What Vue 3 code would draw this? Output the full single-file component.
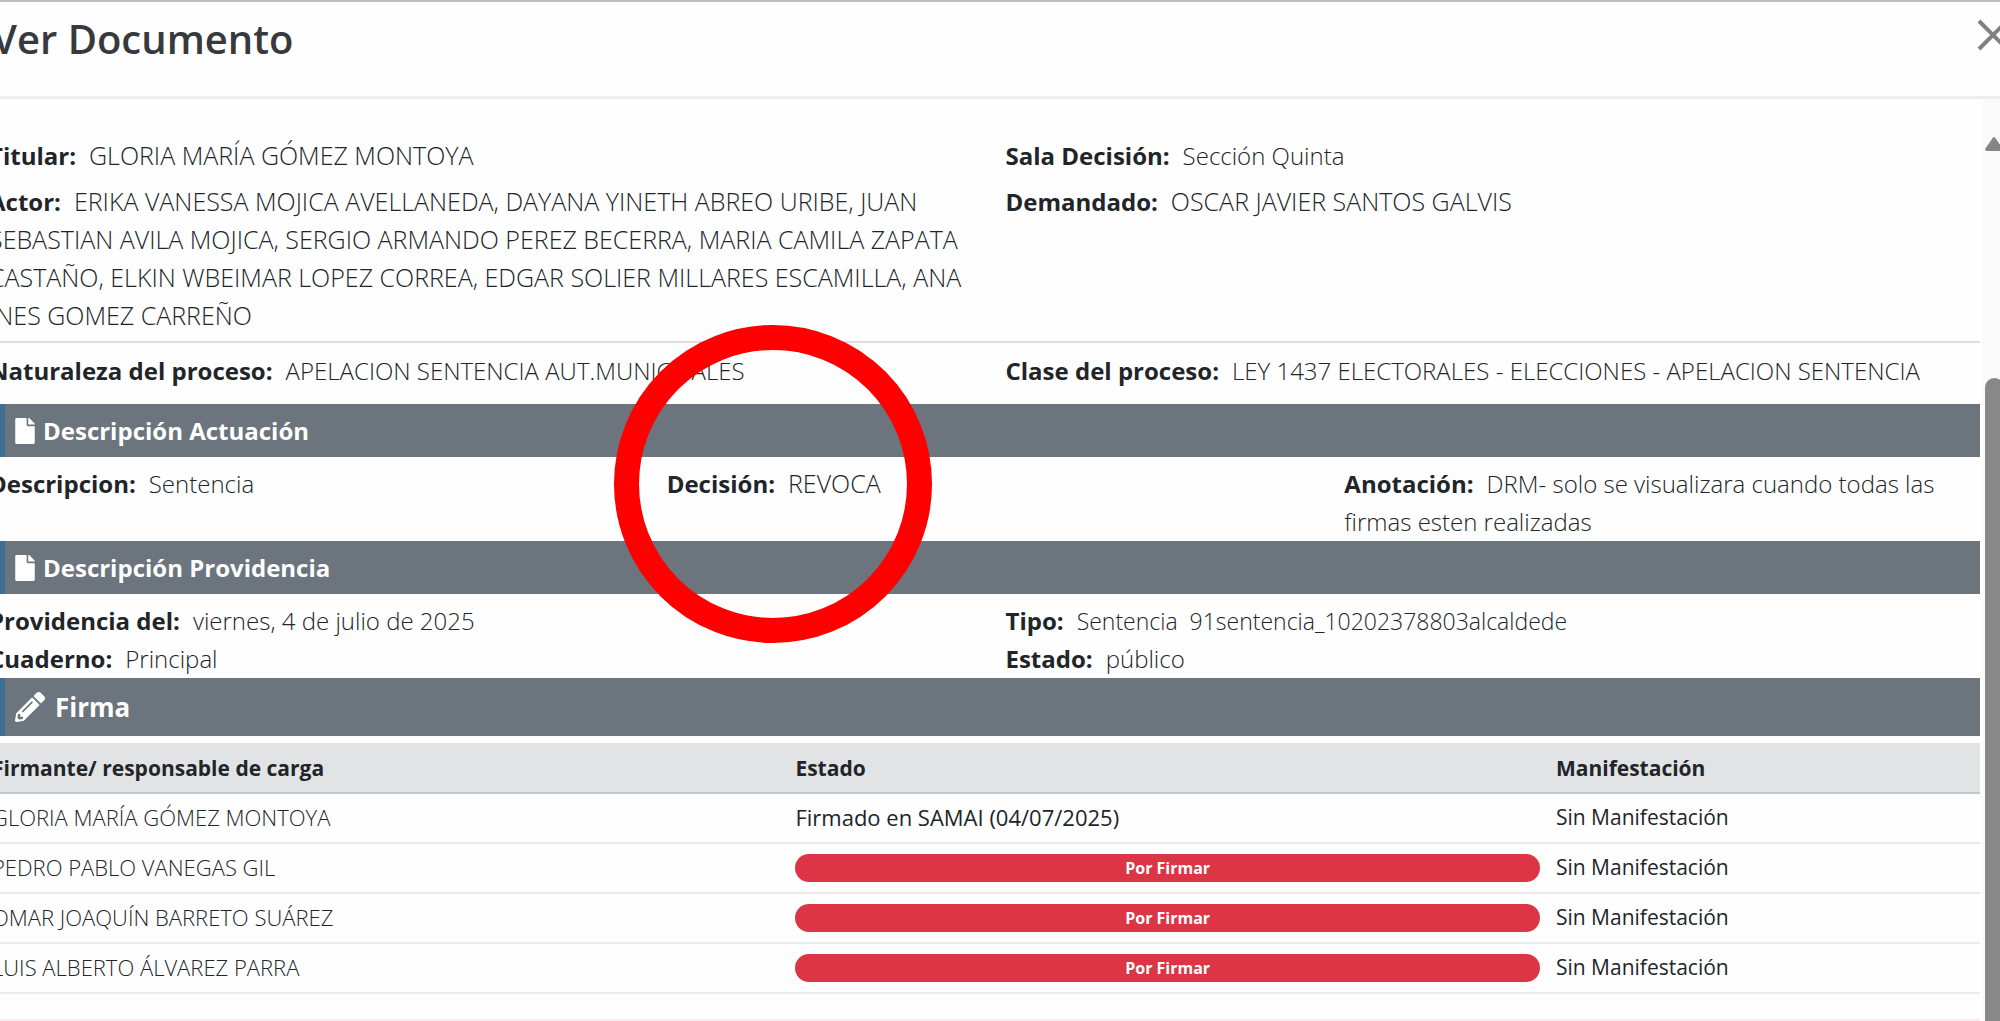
<script setup>
const firmantes = [
  { nombre: 'GLORIA MARÍA GÓMEZ MONTOYA', estado: 'Firmado en SAMAI (04/07/2025)', pendiente: false },
  { nombre: 'PEDRO PABLO VANEGAS GIL', estado: 'Por Firmar', pendiente: true },
  { nombre: 'OMAR JOAQUÍN BARRETO SUÁREZ', estado: 'Por Firmar', pendiente: true },
  { nombre: 'LUIS ALBERTO ÁLVAREZ PARRA', estado: 'Por Firmar', pendiente: true },
]
</script>

<template>
  <div class="modal">
    <header class="modal-header">
      <h1>Ver Documento</h1>
      <button class="close" type="button" aria-label="Cerrar">
        <svg viewBox="0 0 32 32" aria-hidden="true"><path d="M2 2 30 30M30 2 2 30" /></svg>
      </button>
    </header>

    <div class="modal-main">
      <main class="content">
        <div class="grid two parties">
          <p><b>Titular:</b><span class="caps">GLORIA MARÍA GÓMEZ MONTOYA</span></p>
          <p><b>Sala Decisión:</b><span>Sección Quinta</span></p>
          <p><b>Actor:</b><span class="caps">ERIKA VANESSA MOJICA AVELLANEDA, DAYANA YINETH ABREO URIBE, JUAN SEBASTIAN AVILA MOJICA, SERGIO ARMANDO PEREZ BECERRA, MARIA CAMILA ZAPATA CASTAÑO, ELKIN WBEIMAR LOPEZ CORREA, EDGAR SOLIER MILLARES ESCAMILLA, ANA INES GOMEZ CARREÑO</span></p>
          <p><b>Demandado:</b><span class="caps">OSCAR JAVIER SANTOS GALVIS</span></p>
        </div>
        <div class="grid two process">
          <p><b>Naturaleza del proceso:</b><span>APELACION SENTENCIA AUT.MUNICIPALES</span></p>
          <p><b>Clase del proceso:</b><span>LEY 1437 ELECTORALES - ELECCIONES - APELACION SENTENCIA</span></p>
        </div>

        <h2 class="bar">
          <svg class="file" viewBox="0 0 384 512" aria-hidden="true"><path d="M224 136V0H24C11 0 0 11 0 24v464c0 13 11 24 24 24h336c13 0 24-11 24-24V160H248c-13 0-24-11-24-24zm160-14v6H256V0h6c6 0 12 3 17 7l98 98c4 5 7 11 7 17z" /></svg>
          Descripción Actuación
        </h2>
        <div class="grid three details">
          <p><b>Descripcion:</b><span>Sentencia</span></p>
          <div class="decision">
            <p><b>Decisión:</b><span class="caps">REVOCA</span></p>
            <i class="ring" aria-hidden="true"></i>
          </div>
          <p><b>Anotación:</b><span>DRM- solo se visualizara cuando todas las firmas esten realizadas</span></p>
        </div>

        <h2 class="bar">
          <svg class="file" viewBox="0 0 384 512" aria-hidden="true"><path d="M224 136V0H24C11 0 0 11 0 24v464c0 13 11 24 24 24h336c13 0 24-11 24-24V160H248c-13 0-24-11-24-24zm160-14v6H256V0h6c6 0 12 3 17 7l98 98c4 5 7 11 7 17z" /></svg>
          Descripción Providencia
        </h2>
        <div class="grid two details">
          <p><b>Providencia del:</b><span>viernes, 4 de julio de 2025</span></p>
          <p><b>Tipo:</b><span class="file-name">Sentencia&nbsp; 91sentencia_10202378803alcaldede</span></p>
          <p><b>Cuaderno:</b><span>Principal</span></p>
          <p><b>Estado:</b><span>público</span></p>
        </div>

        <h2 class="bar large">
          <svg class="pencil" viewBox="0 0 512 512" aria-hidden="true"><path d="M498 142l-47 47c-5 5-12 5-17 0L323 78c-5-5-5-12 0-17l47-47c19-19 49-19 68 0l60 60c19 19 19 49 0 68zm-214-42L22 362 0 484c-3 17 12 31 28 28l122-21 262-262c5-5 5-12 0-17L301 100c-5-5-12-5-17 0zM124 340c-5-6-5-14 0-20l154-154c6-5 14-5 20 0s5 14 0 20L144 340c-6 5-14 5-20 0zm-36 84h48v36l-64 11-31-31 11-64h36v48z" /></svg>
          Firma
        </h2>

        <table>
          <thead>
            <tr>
              <th class="c-name" scope="col">Firmante/ responsable de carga</th>
              <th class="c-state" scope="col">Estado</th>
              <th scope="col">Manifestación</th>
            </tr>
          </thead>
          <tbody>
            <tr v-for="f in firmantes" :key="f.nombre">
              <td class="name">{{ f.nombre }}</td>
              <td><span :class="{ pill: f.pendiente }">{{ f.estado }}</span></td>
              <td class="note">Sin Manifestación</td>
            </tr>
          </tbody>
        </table>
      </main>

      <div class="scroll" aria-hidden="true">
        <svg viewBox="0 0 18 14"><path d="M9 0 Q10 0 11 2L18 12Q18 14 16 14H2Q0 14 0 12L7 2Q8 0 9 0Z" /></svg>
        <div class="thumb"></div>
      </div>
    </div>
  </div>
</template>

<style>
body {
  margin: 0;
  background: #fefefe;
}
</style>

<style scoped>
.modal {
  display: flex;
  flex-direction: column;
  box-sizing: border-box;
  height: 100vh;
  overflow: hidden;
  border-top: 2px solid #bdbdbd;
  background: #fefefe;
  color: #212529;
  font-family: "Open Sans", "Noto Sans", sans-serif;
  font-size: 24px;
  line-height: 38px;
}
.modal-header {
  display: flex;
  justify-content: space-between;
  align-items: flex-start;
  flex: none;
  height: 94px;
  margin: 0 -9px 0 -8px;
  border-bottom: 3px solid #eeeeee;
}
h1 {
  margin: 0;
  padding-top: 12px;
  font-size: 40px;
  font-weight: 600;
  line-height: 50px;
  color: #37393c;
}
.close {
  width: 32px;
  height: 32px;
  margin-top: 17px;
  padding: 0;
  border: 0;
  background: none;
}
.close svg {
  display: block;
  fill: none;
  stroke: #808080;
  stroke-width: 4;
}
.modal-main {
  display: flex;
  flex: 1;
  min-height: 0;
  margin: 0 -4px 0 -11px;
}
.content {
  flex: 1;
  min-width: 0;
  border-bottom: 2px solid #fdeced;
}
.grid {
  display: grid;
  column-gap: 42px;
}
.two {
  grid-template-columns: repeat(2, minmax(0, 1fr));
}
.three {
  grid-template-columns: repeat(3, minmax(0, 1fr));
}
.parties {
  row-gap: 8px;
  padding: 38px 0 6px;
  border-bottom: 2px solid #dedede;
}
.process {
  padding: 9px 0 14px;
}
.details {
  padding-top: 8px;
}
p {
  margin: 0;
}
p b {
  margin-right: 13px;
  font-weight: 700;
}
p span {
  font-weight: 300;
}
.caps {
  font-size: 25px;
  line-height: 30px;
}
.file-name {
  font-size: 23px;
  line-height: 30px;
}
.decision {
  position: relative;
}
.ring {
  position: absolute;
  top: -140px;
  left: -53px;
  z-index: 1;
  box-sizing: border-box;
  width: 318px;
  height: 318px;
  border: 25px solid #ff0000;
  border-radius: 50%;
}
.bar {
  display: flex;
  align-items: center;
  gap: 8px;
  height: 53px;
  margin: 0;
  padding-left: 10px;
  border-left: 16px solid #3f6f96;
  background: #6c747d;
  color: #ffffff;
  font-size: 24px;
  font-weight: 700;
}
.large {
  gap: 10px;
  height: 58px;
  font-size: 26px;
}
.bar svg {
  flex: none;
  fill: #ffffff;
}
.file {
  width: 20px;
  height: 26px;
}
.pencil {
  width: 30px;
  height: 30px;
}
table {
  width: 100%;
  margin-top: 7px;
  border-collapse: collapse;
  table-layout: fixed;
  font-size: 22px;
  line-height: 30px;
}
th,
td {
  box-sizing: border-box;
  height: 50px;
  padding: 0 8px 2px;
  border-bottom: 2px solid #e9ebec;
  text-align: left;
}
th:first-child,
td:first-child {
  padding-left: 3px;
}
th {
  padding-bottom: 0;
  border-bottom-color: #c6c9cb;
  background: #e2e3e5;
  font-size: 21px;
  font-weight: 700;
}
.c-name {
  width: 40.1%;
}
.c-state {
  width: 38.2%;
}
.name {
  font-weight: 300;
}
.note {
  font-size: 21px;
}
.pill {
  display: block;
  margin-top: 2px;
  border-radius: 14px;
  background: #dc3545;
  color: #ffffff;
  font-size: 16px;
  font-weight: 700;
  line-height: 28px;
  text-align: center;
}
.scroll {
  display: flex;
  flex-direction: column;
  flex: none;
  width: 19px;
  margin-left: 3px;
  padding: 38px 0 0 2px;
  background: #fafafa;
}
.scroll svg {
  flex: none;
  width: 18px;
  height: 14px;
  fill: #858585;
}
.thumb {
  flex: 1;
  margin-top: 227px;
  border-radius: 10px 10px 0 0;
  background: #888888;
}
</style>
